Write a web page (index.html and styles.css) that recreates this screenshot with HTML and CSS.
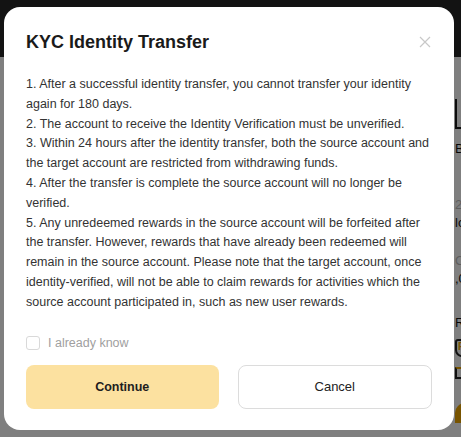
FILE: index.html
```html
<!DOCTYPE html>
<html lang="en">
<head>
<meta charset="utf-8">
<title>KYC Identity Transfer</title>
<link rel="stylesheet" href="styles.css">
</head>
<body>
<div class="page">
  <header class="page-header"></header>
  <div class="page-body">
    <div class="page-main"></div>
    <div class="page-side">
      <div class="side-bar"></div>
      <div class="side-text s1">B</div>
      <div class="side-text s2 muted">2</div>
      <div class="side-text s3">lc</div>
      <div class="side-text s4 muted">Co</div>
      <div class="side-text s5">,0</div>
      <div class="side-text s6">R</div>
      <div class="side-icon s7">P</div>
      <div class="side-ticket s8"></div>
      <div class="side-coin"></div>
    </div>
  </div>
</div>
<div class="overlay"></div>
<div class="modal" role="dialog" aria-labelledby="modal-title">
  <div class="modal-head">
    <h2 id="modal-title" class="modal-title">KYC Identity Transfer</h2>
    <button class="close" aria-label="Close">
      <svg width="12" height="12" viewBox="0 0 12 12"><path d="M1 1L11 11M11 1L1 11" stroke="#c8c8c8" stroke-width="1.2" fill="none"/></svg>
    </button>
  </div>
  <div class="modal-body">
    <p>1. After a successful identity transfer, you cannot transfer your identity again for 180 days.</p>
    <p>2. The account to receive the Identity Verification must be unverified.</p>
    <p>3. Within 24 hours after the identity transfer, both the source account and the target account are restricted from withdrawing funds.</p>
    <p>4. After the transfer is complete the source account will no longer be verified.</p>
    <p>5. Any unredeemed rewards in the source account will be forfeited after the transfer. However, rewards that have already been redeemed will remain in the source account. Please note that the target account, once identity-verified, will not be able to claim rewards for activities which the source account participated in, such as new user rewards.</p>
  </div>
  <label class="check">
    <span class="check-box"></span>
    <span class="check-label">I already know</span>
  </label>
  <div class="actions">
    <button class="btn btn-primary">Continue</button>
    <button class="btn btn-secondary">Cancel</button>
  </div>
</div>
</body>
</html>
```

FILE: styles.css
```css
* { box-sizing: border-box; }
html, body { margin: 0; padding: 0; }
body {
  width: 461px;
  height: 437px;
  overflow: hidden;
  font-family: "Liberation Sans", Arial, sans-serif;
  background: #fff;
  position: relative;
}

.page { width: 461px; height: 437px; display: flex; flex-direction: column; }
.page-header { height: 57px; background: #262626; flex: none; }
.page-body { flex: 1; display: flex; background: #fff; }
.page-main { width: 455px; flex: none; }
.page-side { flex: 1; display: flex; flex-direction: column; font-size: 13px; color: #111; overflow: hidden; white-space: nowrap; }
.side-bar { height: 30px; width: 10px; border-left: 2px solid #1a1a1a; border-bottom: 2px solid #1a1a1a; margin-top: 42px; }
.side-text { line-height: 16px; }
.s1 { margin-top: 12px; }
.s2 { margin-top: 40px; }
.s3 { margin-top: 2px; }
.s4 { margin-top: 22px; }
.s5 { margin-top: 2px; }
.s6 { margin-top: 28px; }
.muted { color: #bbb; }
.side-icon { margin-top: 8px; width: 14px; height: 18px; border: 2px solid #222; border-radius: 3px 3px 7px 7px; color: #f0a800; font-size: 10px; font-weight: bold; padding-left: 1px; }
.side-ticket { margin-top: 10px; width: 14px; height: 12px; border-top: 2px solid #f0a800; border-bottom: 2px solid #222; border-left: 2px solid #222; }
.side-coin { margin-top: 24px; width: 30px; height: 20px; border-radius: 10px 0 0 0; background: #f0a800; }

.overlay { position: absolute; inset: 0; background: rgba(0, 0, 0, 0.5); }

.modal {
  position: absolute;
  left: 4px;
  top: 7px;
  width: 450px;
  height: 423px;
  background: #fff;
  border-radius: 16px;
  padding: 22px 22px 0 22px;
  display: flex;
  flex-direction: column;
}
.modal-head { display: flex; align-items: center; justify-content: space-between; height: 26px; }
.modal-title { margin: 0; font-size: 18px; font-weight: bold; color: #1a1a1a; line-height: 26px; }
.close { background: none; border: 0; padding: 0; width: 12px; height: 12px; margin-right: 1px; display: flex; cursor: pointer; }

.modal-body { margin-top: 20px; font-size: 12.5px; line-height: 19.8px; color: #333; }
.modal-body p { margin: 0; }

.check { display: flex; align-items: center; gap: 8px; margin-top: 22px; height: 16px; }
.check-box { width: 14px; height: 14px; border: 1px solid #d9d9d9; border-radius: 3px; background: #fff; }
.check-label { font-size: 12.5px; color: #a0a0a0; }

.actions { display: flex; gap: 19px; margin-top: 14px; }
.btn { flex: 1; height: 44px; border-radius: 8px; font-family: "Liberation Sans", Arial, sans-serif; font-size: 12.5px; color: #1e1e1e; cursor: pointer; }
.btn-primary { background: #fce1a0; border: 0; font-weight: bold; }
.btn-secondary { background: #fff; border: 1px solid #dcdcdc; color: #222; font-size: 13px; }
```
